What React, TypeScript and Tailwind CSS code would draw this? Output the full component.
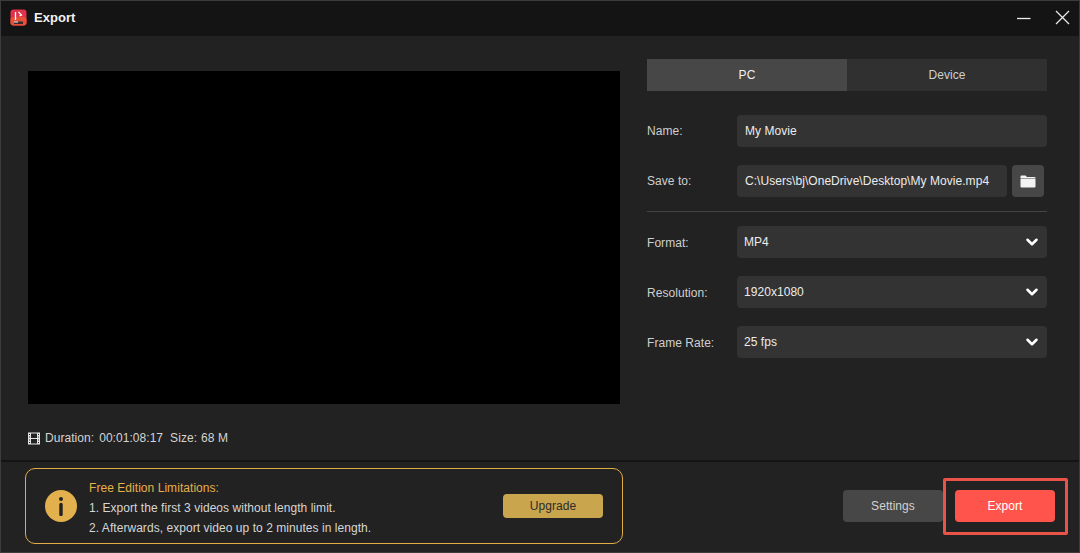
import { ChevronDown } from 'lucide-react';

const font = { fontFamily: '"Liberation Sans", Arial, sans-serif' };

function Select({ label, value }: { label: string; value: string }) {
  return (
    <div className="flex items-center h-8 mb-[18px]">
      <span className="w-[90px] text-[12px] text-[#cfcfcf] pt-0.5">{label}</span>
      <div className="flex-1 h-8 rounded bg-[#333333] flex items-center justify-between pl-[7px] pr-[6px] text-[12px] text-[#ececec] pb-px">
        <span>{value}</span>
        <ChevronDown className="w-[18px] h-[18px] text-white" strokeWidth={3.4} />
      </div>
    </div>
  );
}

export default function App() {
  return (
    <div style={font} className="relative w-[1080px] h-[553px] overflow-hidden bg-[#222222] border border-[#3c3c3c] flex flex-col tracking-[0.05px]">
      {/* Title bar */}
      <div className="h-[35px] shrink-0 bg-[#141414] flex items-center pl-[9px] pb-0.5">
        <svg width="17" height="17" viewBox="0 0 17 17">
          <rect x="0.5" y="0.5" width="16" height="16" rx="3" fill="#e0324a" />
          <rect x="0.5" y="8" width="16" height="8.5" rx="3" fill="#e8503a" />
          <path d="M5.5 3v8M8.5 3l3 3-2 1" stroke="#fff" strokeWidth="1.3" fill="none" />
          <rect x="4" y="12.5" width="9" height="2.5" fill="#3a2a2a" />
          <rect x="4" y="12.5" width="4" height="1" fill="#fff" />
        </svg>
        <span className="ml-[7px] text-[13px] font-bold text-[#f2f2f2]">Export</span>
        <div className="ml-auto flex items-center">
          <svg width="14" height="14" viewBox="0 0 14 14" className="mr-[24px]">
            <path d="M0 7.5h13.5" stroke="#eeeeee" strokeWidth="1.3" />
          </svg>
          <svg width="15" height="15" viewBox="0 0 15 15" className="mr-[9px]">
            <path d="M1 1l13 13M14 1L1 14" stroke="#e8e8e8" strokeWidth="1.3" />
          </svg>
        </div>
      </div>

      {/* Main */}
      <div className="flex h-[424px] shrink-0">
        <div className="w-[646px] pl-[27px] pt-[35px]">
          <div className="w-[592px] h-[333px] bg-black" />
          <div className="flex items-center mt-[25px] text-[12px] text-[#d4d4d4]">
            <svg width="12" height="13" viewBox="0 0 12 13" className="mr-[5px]">
              <rect x="0" y="0.5" width="12" height="12" fill="#e4e4e4" />
              <rect x="3" y="1.5" width="6" height="4.5" fill="#222" />
              <rect x="3" y="7" width="6" height="4.5" fill="#222" />
              <path d="M1 2.5h1M1 5h1M1 8h1M1 10.5h1M10 2.5h1M10 5h1M10 8h1M10 10.5h1" stroke="#222" strokeWidth="1" />
            </svg>
            <span>Duration:</span>
            <span className="ml-[5px]">00:01:08:17</span>
            <span className="ml-[7px]">Size:</span>
            <span className="ml-[4px]">68 M</span>
          </div>
        </div>

        <div className="w-[400px] pt-[23px]">
          <div className="flex h-8 text-[12px]">
            <div className="w-[200px] bg-[#474747] text-[#f0f0f0] flex items-center justify-center">PC</div>
            <div className="w-[200px] bg-[#303030] text-[#cfcfcf] flex items-center justify-center">Device</div>
          </div>

          <div className="flex items-center h-8 mt-6">
            <span className="w-[90px] text-[12px] text-[#cfcfcf]">Name:</span>
            <div className="flex-1 h-8 rounded bg-[#333333] flex items-center pl-2 text-[12px] text-[#ececec]">My Movie</div>
          </div>

          <div className="flex items-center h-8 mt-[18px]">
            <span className="w-[90px] text-[12px] text-[#cfcfcf]">Save to:</span>
            <div className="w-[270px] h-8 rounded bg-[#333333] flex items-center pl-2 text-[12px] text-[#ececec] whitespace-nowrap">
              C:\Users\bj\OneDrive\Desktop\My Movie.mp4
            </div>
            <div className="w-8 h-8 ml-[5px] rounded bg-[#474747] flex items-center justify-center">
              <svg width="16" height="13" viewBox="0 0 16 13">
                <path d="M0.5 1.5a1 1 0 0 1 1-1h4l1.5 1.5h7.5a1 1 0 0 1 1 1v.5H0.5z" fill="#f4f4f4" />
                <path d="M0.5 4h15v7.5a1 1 0 0 1-1 1h-13a1 1 0 0 1-1-1z" fill="#f4f4f4" />
              </svg>
            </div>
          </div>

          <div className="h-px bg-[#444444] mt-[14px] mb-[14px]" />

          <Select label="Format:" value="MP4" />
          <Select label="Resolution:" value="1920x1080" />
          <Select label="Frame Rate:" value="25 fps" />
        </div>
      </div>

      {/* Footer */}
      <div className="flex-1 border-t-2 border-[#141414] flex items-start pl-6 pt-[6px]">
        <div className="w-[598px] h-[76px] rounded-[10px] border border-[#e0ae45] flex items-center pl-[19px] pr-[19px]">
          <div className="w-8 h-8 rounded-full bg-[#e2b04d] flex items-center justify-center shrink-0">
            <svg width="6" height="20" viewBox="0 0 6 20">
              <circle cx="3" cy="3" r="2" fill="#222" />
              <path d="M3 8.5v10" stroke="#222" strokeWidth="3.4" strokeLinecap="round" />
            </svg>
          </div>
          <div className="ml-3 pt-1 text-[12px] leading-5 text-[#d6d6d6]">
            <div className="text-[#e6b04a]">Free Edition Limitations:</div>
            <div>1. Export the first 3 videos without length limit.</div>
            <div>2. Afterwards, export video up to 2 minutes in length.</div>
          </div>
          <div className="ml-auto w-[100px] h-6 rounded bg-[#c9a54e] flex items-center justify-center text-[12px] text-[#2c2c2c] shrink-0">
            Upgrade
          </div>
        </div>

        <div className="ml-[220px] mt-[22px] flex gap-3">
          <div className="w-[100px] h-8 rounded bg-[#474747] flex items-center justify-center text-[12px] text-[#d2d2d2]">Settings</div>
          <div className="w-[100px] h-8 rounded bg-[#ff544b] flex items-center justify-center text-[12px] text-white">Export</div>
        </div>
      </div>

      {/* Red highlight drawn over the screenshot */}
      <div className="absolute left-[942px] top-[477px] w-[125px] h-[57px] border-[3px] border-[#ea5348] rounded-[2px]" />
    </div>
  );
}
